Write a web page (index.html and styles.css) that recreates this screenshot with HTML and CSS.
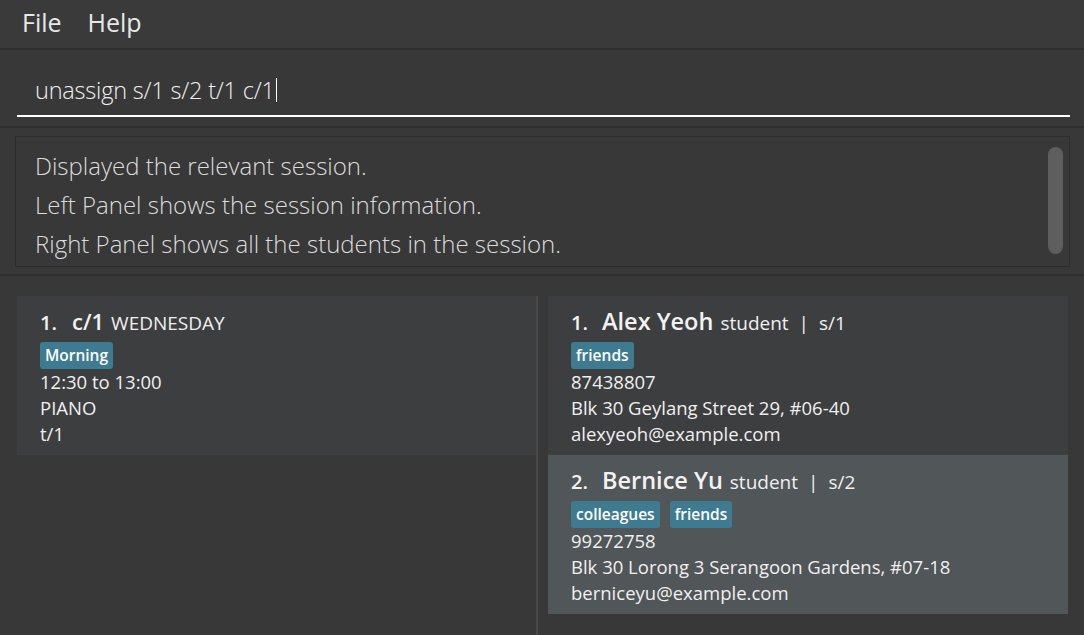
FILE: index.html
```html
<!DOCTYPE html>
<html lang="en">
<head>
<meta charset="utf-8">
<title>TutorLink</title>
<link rel="stylesheet" href="styles.css">
</head>
<body>
<div class="app">
  <nav class="menubar">
    <span class="menu-item">File</span>
    <span class="menu-item">Help</span>
  </nav>
  <section class="command">
    <div class="command-field"><span class="command-text">unassign s/1 s/2 t/1 c/1</span><span class="caret"></span></div>
  </section>
  <section class="result">
    <div class="result-box">
      <div class="result-text">
        <p>Displayed the relevant session.</p>
        <p>Left Panel shows the session information.</p>
        <p>Right Panel shows all the students in the session.</p>
      </div>
      <div class="scrollbar"><div class="thumb"></div></div>
    </div>
  </section>
  <main class="lists">
    <div class="pane pane-left">
      <div class="card even">
        <div class="title"><span class="idx">1.</span><span class="name">c/1</span><span class="sub">WEDNESDAY</span></div>
        <div class="tags"><span class="tag">Morning</span></div>
        <div class="line">12:30 to 13:00</div>
        <div class="line">PIANO</div>
        <div class="line">t/1</div>
      </div>
    </div>
    <div class="divider"></div>
    <div class="pane pane-right">
      <div class="card even">
        <div class="title"><span class="idx">1.</span><span class="name big">Alex Yeoh</span><span class="sub">student</span><span class="sep">|</span><span class="sub">s/1</span></div>
        <div class="tags"><span class="tag">friends</span></div>
        <div class="line">87438807</div>
        <div class="line">Blk 30 Geylang Street 29, #06-40</div>
        <div class="line">alexyeoh@example.com</div>
      </div>
      <div class="card odd">
        <div class="title"><span class="idx">2.</span><span class="name big">Bernice Yu</span><span class="sub">student</span><span class="sep">|</span><span class="sub">s/2</span></div>
        <div class="tags"><span class="tag">colleagues</span><span class="tag">friends</span></div>
        <div class="line">99272758</div>
        <div class="line">Blk 30 Lorong 3 Serangoon Gardens, #07-18</div>
        <div class="line">berniceyu@example.com</div>
      </div>
    </div>
  </main>
</div>
</body>
</html>
```
FILE: styles.css
```css
* { box-sizing: border-box; }
html, body { margin: 0; padding: 0; }
body {
  background: #383838;
  color: #ffffff;
  font-family: "Open Sans", "Noto Sans", sans-serif;
  width: 1084px;
  height: 635px;
  overflow: hidden;
}
.app { display: flex; flex-direction: column; height: 635px; }

.menubar {
  flex: none;
  height: 50px;
  background: #3a3a3a;
  border-bottom: 2px solid #2f2f2f;
  display: flex;
  align-items: center;
  padding-left: 22px;
  gap: 26px;
}
.menu-item {
  font-size: 25px;
  color: #e8e8e8;
  line-height: 1;
  margin-top: -4px;
}

.command {
  flex: none;
  height: 78px;
  padding: 0 14px 0 17px;
  border-bottom: 2px solid #2f2f2f;
  display: flex;
  align-items: flex-start;
}
.command-field {
  margin-top: 27px;
  width: 1053px;
  height: 40px;
  border-bottom: 2px solid #ffffff;
  padding: 0 0 12px 18px;
  display: flex;
  align-items: center;
}
.command-text {
  font-size: 23.5px;
  font-weight: 300;
  color: #f0f0f0;
  letter-spacing: -0.2px;
  line-height: 28px;
}
.caret {
  display: inline-block;
  width: 1px;
  height: 24px;
  background: #ffffff;
  margin-left: 1px;
}

.result {
  flex: none;
  height: 148px;
  padding: 8px 15px 0 15px;
  border-bottom: 2px solid #2f2f2f;
}
.result-box {
  height: 131px;
  width: 1055px;
  border: 1px solid #2c2c2c;
  display: flex;
  justify-content: space-between;
  padding: 9px 5px 0 19px;
}
.result-text p {
  margin: 0;
  font-size: 24px;
  font-weight: 300;
  line-height: 39px;
  color: #dcdcdc;
  white-space: nowrap;
}
.scrollbar { width: 16px; padding-top: 1px; }
.thumb {
  width: 15px;
  height: 107px;
  border-radius: 8px;
  background: #5e5e5e;
}

.lists {
  flex: 1;
  display: flex;
  padding: 20px 16px 0 17px;
}
.pane { display: flex; flex-direction: column; }
.pane-left { width: 519px; }
.divider {
  width: 2px;
  background: #4a4a4a;
  align-self: stretch;
}
.pane-right { width: 520px; margin-left: 10px; }

.card {
  flex: none;
  height: 159px;
  padding: 10px 22px 8px 23px;
}
.card.even { background: #3c3e3f; }
.card.odd { background: #515658; }

.title {
  height: 30px;
  display: flex;
  align-items: baseline;
  white-space: nowrap;
  line-height: 30px;
}
.idx {
  font-size: 20px;
  font-weight: 600;
  width: 32px;
  color: #f2f2f2;
}
.pane-right .idx { width: 31px; }
.name {
  font-size: 22px;
  font-weight: 600;
  margin-right: 7px;
  color: #f2f2f2;
}
.name.big { font-size: 23.5px; margin-right: 7px; }
.sub {
  font-size: 19px;
  color: #f0f0f0;
}
.sep {
  font-size: 19px;
  color: #f0f0f0;
  margin: 0 10px;
}

.tags {
  margin-top: 6px;
  height: 27px;
  display: flex;
  gap: 10px;
}
.tag {
  background: #3e7b91;
  color: #ffffff;
  font-size: 15.5px;
  font-weight: 600;
  height: 27px;
  line-height: 27px;
  padding: 0 5px;
  border-radius: 3px;
}
.line {
  font-size: 18.5px;
  line-height: 26px;
  height: 26px;
  color: #f0f0f0;
  white-space: nowrap;
}
```
